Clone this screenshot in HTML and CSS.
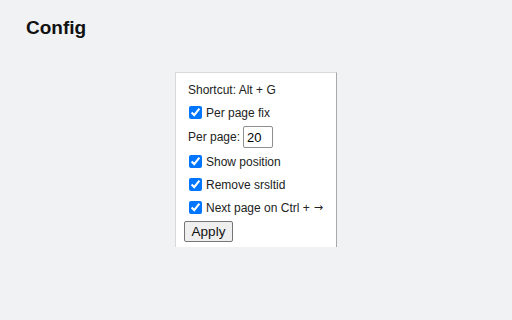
FILE: index.html
```html
<!DOCTYPE html>
<html>
<head>
    <meta charset="utf-8">
    <title>Config</title>
    <link rel="stylesheet" href="styles.css">
</head>
<body>
    <h1 class="title">Config</h1>
    <section class="panel">
        <div class="row">Shortcut: Alt + G</div>
        <label class="row"><input type="checkbox" checked> Per page fix</label>
        <div class="row row-tall">Per page: <input type="text" class="num" value="20"></div>
        <label class="row"><input type="checkbox" checked> Show position</label>
        <label class="row"><input type="checkbox" checked> Remove srsltid</label>
        <label class="row"><input type="checkbox" checked> Next page on Ctrl + <span class="arrow">→</span></label>
        <button class="apply">Apply</button>
    </section>
</body>
</html>
```
FILE: styles.css
```css
body {
    margin: 0;
    padding: 0;
    background: #f1f2f4;
    font-family: "Liberation Sans", Arial, sans-serif;
}
.title {
    margin: 0;
    padding: 17px 0 0 26px;
    height: 72px;
    box-sizing: border-box;
    font-size: 19px;
    font-weight: bold;
    color: #111;
}
.panel {
    width: 162px;
    height: 175px;
    margin: 0 auto;
    box-sizing: border-box;
    padding: 5px 8px 0 8px;
    background: #fff;
    border: 1px solid #d9d9d9;
    border-right-color: #a9a9a9;
    border-bottom: none;
    display: flex;
    flex-direction: column;
    align-items: flex-start;
    font-size: 12px;
    color: #222;
}
.row {
    height: 23px;
    padding-left: 4px;
    display: flex;
    align-items: center;
    white-space: nowrap;
}
.row-tall {
    height: 26px;
}
.row input[type="checkbox"] {
    width: 13px;
    height: 13px;
    margin: 0 4px 0 1px;
}
.arrow {
    margin-left: 4px;
    font-family: "DejaVu Sans", sans-serif;
    font-size: 11px;
}
.num {
    width: 30px;
    height: 22px;
    box-sizing: border-box;
    margin-left: 3px;
    padding: 1px 3px;
    border: 1px solid #8f8f8f;
    border-radius: 2px;
    font-family: inherit;
    font-size: 13px;
}
.apply {
    margin-top: 2px;
    width: 49px;
    height: 21px;
    padding: 0;
    font-family: inherit;
    font-size: 13.5px;
    color: #111;
    background: #efefef;
    border: 1px solid #767676;
    border-radius: 2px;
}
```
